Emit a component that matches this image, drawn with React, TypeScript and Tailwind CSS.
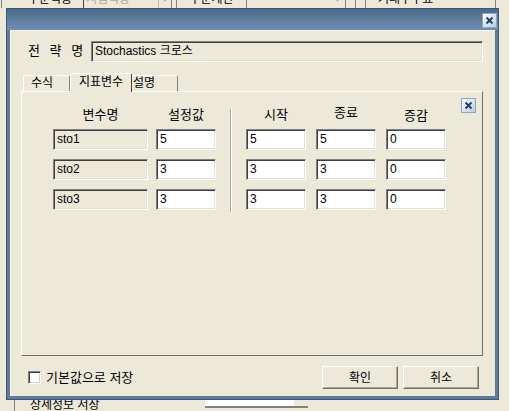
import clsx from 'clsx'

const FONT = 'font-["Liberation_Sans","Noto_Sans_CJK_KR",sans-serif]'

// sunken 3D edit box
function Field({ value, disabled, className }: { value?: string; disabled?: boolean; className?: string }) {
  return (
    <div
      className={clsx(
        'h-[21px] border border-t-[#808080] border-l-[#808080] border-r-white border-b-white shadow-[inset_1px_1px_0_#404040,inset_-1px_-1px_0_#e4e1d0] pl-[3px] text-[12px] leading-[19px] text-black',
        disabled ? 'bg-[#ece9d8]' : 'bg-white',
        className,
      )}
    >
      {value}
    </div>
  )
}

function Button({ label }: { label: string }) {
  return (
    <button className="w-[76px] h-[23px] bg-[#ece9d8] border border-t-white border-l-white border-r-[#716f64] border-b-[#716f64] shadow-[inset_-1px_-1px_0_#aca899] text-[12px] text-black">
      {label}
    </button>
  )
}

function CloseBox({ className }: { className?: string }) {
  return (
    <div
      className={clsx(
        'w-[15px] h-[15px] flex items-center justify-center bg-gradient-to-br from-white to-[#b5cde8] border border-[#8aa6c6]',
        className,
      )}
    >
      <svg width="9" height="9" viewBox="0 0 9 9">
        <path d="M1.5 1.5 L7.5 7.5 M7.5 1.5 L1.5 7.5" stroke="#1d3d66" strokeWidth="1.8" />
      </svg>
    </div>
  )
}

const rows = [
  { name: 'sto1', value: '5', start: '5', end: '5', step: '0' },
  { name: 'sto2', value: '3', start: '3', end: '3', step: '0' },
  { name: 'sto3', value: '3', start: '3', end: '3', step: '0' },
]

export default function App() {
  return (
    <div className={clsx('relative w-[509px] h-[411px] bg-[#ece9d8] overflow-hidden flex flex-col text-black', FONT)}>
      {/* ── background window fragments (top) ───────────────────────── */}
      <div className="h-[8px] overflow-hidden">
        <div className="flex h-[17px] -mt-[9px] text-[12px] leading-[17px]">
          <div className="w-[2px] border-r border-[#808080]" />
          <div className="w-[82px] pl-[26px] border-r border-[#404040]">수문적용</div>
          <div className="w-[88px] flex border-r border-[#808080]">
            <span className="pl-[2px] flex-1 text-[#aca899]">시엽적용</span>
            <span className="w-[13px] border-l border-[#c0bcac] flex items-center justify-center text-[7px] text-[#aca899]">▼</span>
          </div>
          <div className="w-[4px]" />
          <div className="w-[71px] text-center border-x border-[#808080]">수문계산</div>
          <div className="w-[99px] flex justify-end border-r border-[#808080]">
            <span className="w-[15px] flex items-center justify-center text-[7px] text-[#aca899]">▼</span>
          </div>
          <div className="w-[10px] border-r border-[#808080]" />
          <div className="w-[10px] border-r border-[#808080]" />
          <div className="w-[130px] pl-[12px] border-r border-[#808080]">거래수수료</div>
        </div>
      </div>

      <div className="flex-1" />

      {/* ── background window fragments (bottom) ────────────────────── */}
      <div className="h-[11px] overflow-hidden flex text-[12px] leading-[14px]">
        <div className="w-[15px] border-r border-[#808080]" />
        <div className="w-[190px] pl-[15px] -mt-[2px]">상세정보 저장</div>
        <div className="w-[103px] h-[8px] flex bg-white border-b-2 border-[#808080]">
          <span className="flex-1" />
          <span className="w-[15px] bg-[#ece9d8] border-l border-white" />
        </div>
      </div>

      {/* ── dialog window ───────────────────────────────────────────── */}
      <div className="absolute left-[6px] top-[8px] w-[493px] h-[392px] bg-[#5d7c9d] border border-[#3b5877] px-[3px] pb-[3px] flex flex-col">
        {/* title bar */}
        <div className="h-[21px] -mx-[3px] px-[3px] bg-gradient-to-b from-[#4a6a8c] via-[#5f7fa0] to-[#6f8db0] flex items-start justify-end pt-[4px] pr-[2px]">
          <CloseBox className="mr-[-1px]" />
        </div>

        {/* client area */}
        <div className="flex-1 bg-[#ece9d8] border-l border-t border-[#f6f4ec] pt-[10px] pl-[10px] pr-[12px] flex flex-col">
          {/* strategy name */}
          <div className="flex items-center h-[20px]">
            <div className="w-[70px] pl-[7px] text-[13px] tracking-[3px]">전 략 명</div>
            <Field value="Stochastics 크로스" disabled className="flex-1 h-[20px] leading-[18px]" />
          </div>

          {/* tabs */}
          <div className="mt-[12px] h-[18px] flex items-end pl-[2px] relative z-10">
            <div className="w-[47px] h-[16px] border-t border-l border-white border-r border-r-[#808080] rounded-t-[2px] pl-[7px] text-[12px] leading-[15px]">
              수식
            </div>
            <div className="w-[62px] h-[19px] -mb-[1px] bg-[#ece9d8] border-t border-l border-white border-r border-r-[#404040] rounded-t-[2px] pl-[8px] text-[12px] leading-[16px]">
              지표변수
            </div>
            <div className="w-[46px] h-[16px] border-t border-white border-r border-r-[#808080] rounded-t-[2px] pl-[1px] text-[12px] leading-[15px]">
              설명
            </div>
          </div>

          {/* tab panel */}
          <div className="relative h-[265px] border border-t-white border-l-white border-r-[#716f64] border-b-[#716f64] pt-[14px] pl-[31px] flex">
            <CloseBox className="absolute left-[439px] top-[6px] border-[#7b9ebd]" />

            {/* left group */}
            <div className="flex flex-col">
              <div className="flex h-[17px] text-[13px] leading-[17px]">
                <div className="w-[95px] text-center">변수명</div>
                <div className="w-[8px]" />
                <div className="w-[60px] text-center">설정값</div>
              </div>
              <div className="mt-[6px] flex flex-col gap-[9px]">
                {rows.map((r) => (
                  <div key={r.name} className="flex gap-[8px]">
                    <Field value={r.name} disabled className="w-[95px]" />
                    <Field value={r.value} className="w-[60px]" />
                  </div>
                ))}
              </div>
            </div>

            {/* divider */}
            <div className="ml-[14px] mr-[14px] mt-[3px] w-[2px] h-[103px] border-l border-[#aca899] border-r border-r-white" />

            {/* right group */}
            <div className="flex flex-col">
              <div className="flex h-[17px] text-[13px] leading-[17px] gap-[10px]">
                <div className="w-[60px] text-center">시작</div>
                <div className="w-[60px] text-center -mt-[2px]">종료</div>
                <div className="w-[60px] text-center mt-[1px]">증감</div>
              </div>
              <div className="mt-[6px] flex flex-col gap-[9px]">
                {rows.map((r) => (
                  <div key={r.name} className="flex gap-[10px]">
                    <Field value={r.start} className="w-[60px]" />
                    <Field value={r.end} className="w-[60px]" />
                    <Field value={r.step} className="w-[60px]" />
                  </div>
                ))}
              </div>
            </div>
          </div>

          {/* footer */}
          <div className="mt-[10px] flex items-center pr-[4px]">
            <div className="ml-[7px] w-[13px] h-[13px] bg-white border border-t-[#808080] border-l-[#808080] border-r-white border-b-white shadow-[inset_1px_1px_0_#404040,inset_-1px_-1px_0_#d4d0c8]" />
            <span className="ml-[5px] text-[13px]">기본값으로 저장</span>
            <div className="flex-1" />
            <div className="flex gap-[5px]">
              <Button label="확인" />
              <Button label="취소" />
            </div>
          </div>
        </div>
      </div>
    </div>
  )
}
